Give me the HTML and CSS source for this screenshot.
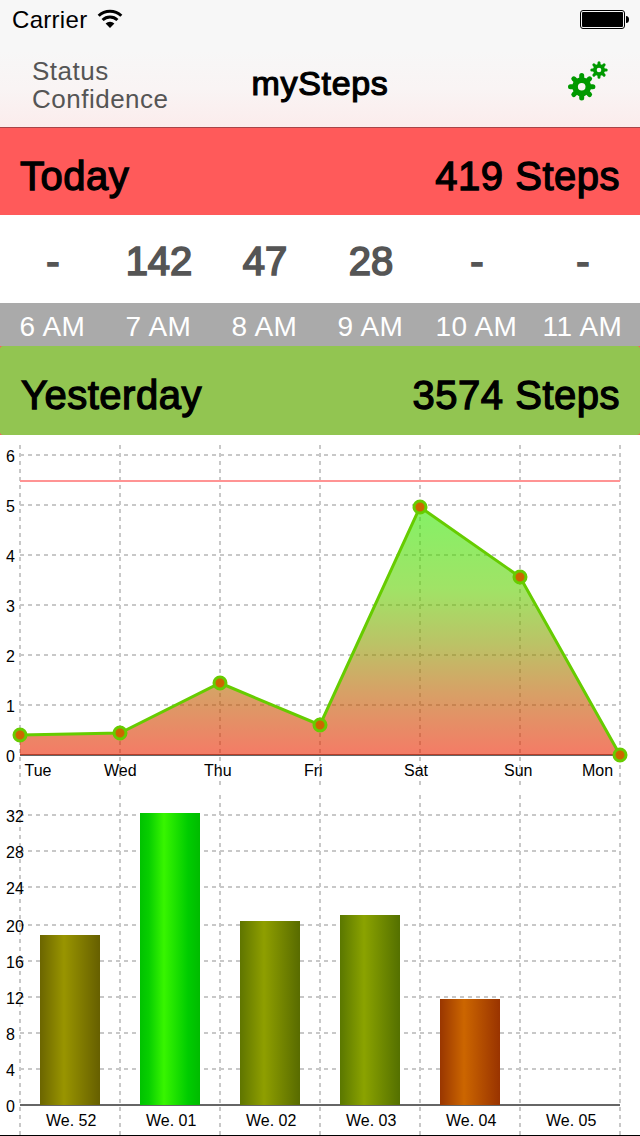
FILE: index.html
```
<!DOCTYPE html>
<html lang="en">
<head>
    <meta charset="UTF-8">
    <meta name="viewport" content="width=device-width, initial-scale=1.0">
    <title>mySteps</title>
    <link rel="stylesheet" href="styles.css">
</head>
<body>
    <div class="app">
        <!-- Status bar + navigation -->
        <header class="header">
            <div class="status-bar">
                <span class="carrier">Carrier</span>
                <svg class="wifi" width="26" height="20" viewBox="0 0 26 20">
                    <path d="M1.700 6.800a16.200 16.200 0 0 1 22.600 0" />
                    <path d="M5.600 11a10.600 10.600 0 0 1 14.800 0" />
                    <path class="wifi-dot" d="M13 19l-4.400-4.500a6.200 6.200 0 0 1 8.800 0z" />
                </svg>
                <svg class="battery" width="50" height="20" viewBox="0 0 50 20">
                    <rect class="battery-frame" x="0.5" y="0.5" width="44" height="18" rx="2.5" />
                    <rect x="2" y="2" width="41" height="15" rx="1" />
                    <path d="M46 6q3 0 3 3.500t-3 3.500z" />
                </svg>
            </div>
            <nav class="nav-bar">
                <div class="status">Status<br>Confidence</div>
                <h1 class="title">mySteps</h1>
                <svg class="settings" width="44" height="44" viewBox="0 0 44 44">
                    <g transform="translate(15.700 27.700)">
                        <g class="teeth">
                            <path d="M0-11.200V11.200M-11.200 0H11.200" />
                            <path d="M-7.900-7.900L7.900 7.900M-7.900 7.900L7.900-7.900" />
                        </g>
                        <circle class="wheel" r="6.500" />
                        <circle class="hole" r="3.800" />
                    </g>
                    <g transform="translate(33 11)">
                        <g class="teeth small">
                            <path d="M0-7.200V7.200M-7.200 0H7.200" />
                            <path d="M-5.100-5.100L5.100 5.100M-5.100 5.100L5.100-5.100" />
                        </g>
                        <circle class="wheel small" r="4" />
                        <circle class="hole" r="2.300" />
                    </g>
                </svg>
            </nav>
        </header>

        <section class="day today">
            <h2>Today</h2>
            <span>419 Steps</span>
        </section>
        <div class="hours counts">
            <span>-</span><span>142</span><span>47</span><span>28</span><span>-</span><span>-</span>
        </div>
        <div class="hours labels">
            <span>6 AM</span><span>7 AM</span><span>8 AM</span><span>9 AM</span><span>10 AM</span><span>11 AM</span>
        </div>
        <div class="yesterday-wrap">
            <section class="day yesterday">
                <h2>Yesterday</h2>
                <span>3574 Steps</span>
            </section>
        </div>

        <!-- Last 7 days -->
        <svg class="chart" width="640" height="350" viewBox="0 0 640 350">
            <defs>
                <linearGradient id="area" x1="0" y1="0" x2="0" y2="1">
                    <stop offset="0" stop-color="#32e800" />
                    <stop offset="0.33" stop-color="#61d000" />
                    <stop offset="0.55" stop-color="#8e9b00" />
                    <stop offset="0.75" stop-color="#bd6100" />
                    <stop offset="1" stop-color="#ed2300" />
                </linearGradient>
            </defs>
            <path class="grid" d="M20 20H620M20 70H620M20 120H620M20 170H620M20 220H620M20 270H620" />
            <path class="grid" d="M20 10V350M120 10V350M220 10V350M320 10V350M420 10V350M520 10V350M620 10V350" />
            <path class="axis" d="M20 320H620" />
            <path class="limit" d="M20 46H620" />
            <path class="area" d="M20 300L120 298L220 248L320 290L420 72L520 142L620 320H20Z" />
            <path class="line" d="M20 300L120 298L220 248L320 290L420 72L520 142L620 320" />
            <g class="dots">
                <circle cx="20" cy="300" r="6" />
                <circle cx="120" cy="298" r="6" />
                <circle cx="220" cy="248" r="6" />
                <circle cx="320" cy="290" r="6" />
                <circle cx="420" cy="72" r="6" />
                <circle cx="520" cy="142" r="6" />
                <circle cx="620" cy="320" r="6" />
            </g>
            <g class="text">
                <text x="6" y="27">6</text>
                <text x="6" y="77">5</text>
                <text x="6" y="127">4</text>
                <text x="6" y="177">3</text>
                <text x="6" y="227">2</text>
                <text x="6" y="277">1</text>
                <text x="6" y="327">0</text>
                <text x="24.500" y="341">Tue</text>
                <text x="104" y="341">Wed</text>
                <text x="204" y="341">Thu</text>
                <text x="304" y="341">Fri</text>
                <text x="404" y="341">Sat</text>
                <text x="504" y="341">Sun</text>
                <text x="582" y="341">Mon</text>
            </g>
        </svg>

        <!-- Last 6 weeks -->
        <svg class="chart weeks" width="640" height="350" viewBox="0 0 640 350">
            <defs>
                <linearGradient id="bar52">
                    <stop offset="0" stop-color="#6b6500" />
                    <stop offset="0.4" stop-color="#999500" />
                    <stop offset="1" stop-color="#665f00" />
                </linearGradient>
                <linearGradient id="bar01">
                    <stop offset="0" stop-color="#00c200" />
                    <stop offset="0.15" stop-color="#08cf00" />
                    <stop offset="0.4" stop-color="#38f500" />
                    <stop offset="0.8" stop-color="#00cc00" />
                    <stop offset="1" stop-color="#00bb00" />
                </linearGradient>
                <linearGradient id="bar02">
                    <stop offset="0" stop-color="#5f7500" />
                    <stop offset="0.4" stop-color="#8f9f00" />
                    <stop offset="1" stop-color="#586b00" />
                </linearGradient>
                <linearGradient id="bar03">
                    <stop offset="0" stop-color="#5a7700" />
                    <stop offset="0.4" stop-color="#8ba300" />
                    <stop offset="1" stop-color="#547000" />
                </linearGradient>
                <linearGradient id="bar04">
                    <stop offset="0" stop-color="#993600" />
                    <stop offset="0.4" stop-color="#cc6600" />
                    <stop offset="1" stop-color="#993300" />
                </linearGradient>
            </defs>
            <path class="grid" d="M20 30H620M20 66H620M20 102H620M20 140H620M20 176H620M20 212H620M20 248H620M20 284H620" />
            <path class="grid" d="M20 10V350M120 10V350M220 10V350M320 10V350M420 10V350M520 10V350M620 10V350" />
            <path class="axis" d="M20 320H620" />
            <rect x="40" y="150" width="60" height="170" fill="url(#bar52)" />
            <rect x="140" y="28" width="60" height="292" fill="url(#bar01)" />
            <rect x="240" y="136" width="60" height="184" fill="url(#bar02)" />
            <rect x="340" y="130" width="60" height="190" fill="url(#bar03)" />
            <rect x="440" y="214" width="60" height="106" fill="url(#bar04)" />
            <g class="text">
                <text x="6" y="37">32</text>
                <text x="6" y="73">28</text>
                <text x="6" y="109">24</text>
                <text x="6" y="147">20</text>
                <text x="6" y="183">16</text>
                <text x="6" y="219">12</text>
                <text x="6" y="255">8</text>
                <text x="6" y="291">4</text>
                <text x="6" y="327">0</text>
                <text x="46" y="341">We. 52</text>
                <text x="146" y="341">We. 01</text>
                <text x="246" y="341">We. 02</text>
                <text x="346" y="341">We. 03</text>
                <text x="446" y="341">We. 04</text>
                <text x="546" y="341">We. 05</text>
            </g>
        </svg>
    </div>
</body>
</html>
```
FILE: styles.css
```
* {
    margin: 0;
    padding: 0;
    box-sizing: border-box;
}

body {
    background: #fff;
    font-family: "Liberation Sans", Arial, sans-serif;
}

.app {
    display: flex;
    flex-direction: column;
    width: 640px;
    height: 1136px;
    overflow: hidden;
    border-bottom: 1px solid #000;
}

svg {
    display: block;
}

/* header */
.header {
    height: 128px;
    flex: none;
    background: linear-gradient(#f7f7f7 40%, #f9f4f4 70%, #fbecec);
    border-bottom: 1px solid #a84448;
}

.status-bar {
    display: flex;
    height: 40px;
    padding: 0 10px 0 12px;
    align-items: center;
}

.carrier {
    font-size: 24px;
    letter-spacing: 0.3px;
}

.wifi {
    margin-left: 10px;
    margin-top: -2px;
    fill: none;
    stroke: #000;
    stroke-width: 3;
}

.wifi-dot {
    fill: #000;
    stroke: none;
}

.battery {
    margin-left: auto;
}

.battery-frame {
    fill: none;
    stroke: #000;
}

.nav-bar {
    display: grid;
    grid-template-columns: 1fr auto 1fr;
    align-items: center;
    height: 87px;
    padding: 0 30px 0 30px;
}

.status {
    padding: 2px 0 0 2px;
    color: #555;
    font-size: 26px;
    line-height: 28px;
    letter-spacing: 0.5px;
}

.title {
    font-size: 34px;
    font-weight: 400;
    letter-spacing: 0.7px;
    -webkit-text-stroke: 1.2px #000;
}

.settings {
    justify-self: end;
    align-self: start;
    margin-top: 19px;
}

.teeth {
    stroke: #090;
    stroke-width: 5;
    stroke-linecap: round;
}

.teeth.small {
    stroke-width: 3;
}

.wheel {
    fill: none;
    stroke: #090;
    stroke-width: 6;
}

.wheel.small {
    stroke-width: 4;
}

.hole {
    fill: #f9f5f5;
}

/* day rows */
.day {
    display: flex;
    justify-content: space-between;
    padding: 0 20px;
    font-size: 40px;
    -webkit-text-stroke: 1.3px #000;
}

.day h2 {
    font-size: 40px;
    font-weight: 400;
    letter-spacing: 0.5px;
}

.day span {
    letter-spacing: 0.5px;
}

.today {
    height: 87px;
    line-height: 96px;
    background: #ff5a5a;
}

.yesterday-wrap {
    background: #ff5a5a;
}

.yesterday {
    height: 89px;
    padding-left: 21px;
    line-height: 98px;
    background: #92c551;
    border-radius: 3px;
}

.hours {
    display: grid;
    grid-template-columns: repeat(6, 106px);
    text-align: center;
}

.counts {
    height: 88px;
    line-height: 93px;
    font-size: 40px;
    color: #555;
    -webkit-text-stroke: 1.7px #555;
}

.labels {
    height: 43px;
    line-height: 48px;
    font-size: 28px;
    letter-spacing: 0.5px;
    text-indent: -1px;
    color: #fff;
    background: #aaa;
}

/* charts */
.chart {
    flex: none;
}

.grid {
    fill: none;
    stroke: #c8c8c8;
    stroke-width: 2;
    stroke-dasharray: 4 4;
}

.axis {
    stroke: #666;
    stroke-width: 2;
}

.limit {
    stroke: #ff9494;
    stroke-width: 2;
}

.area {
    fill: url(#area);
    opacity: 0.6;
}

.line {
    fill: none;
    stroke: #6c0;
    stroke-width: 3;
}

.dots {
    fill: #c60;
    stroke: #6c0;
    stroke-width: 3;
}

.text {
    font-size: 16px;
}
```
